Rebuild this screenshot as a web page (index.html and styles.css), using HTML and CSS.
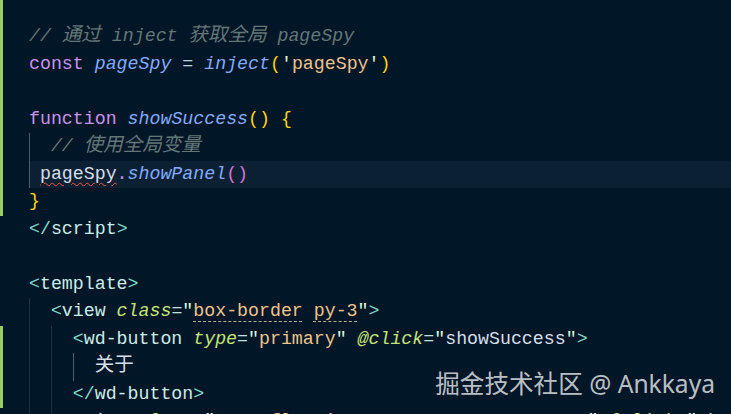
FILE: index.html
```html
<!DOCTYPE html>
<html lang="zh-CN">
<head>
    <meta charset="UTF-8">
    <meta name="viewport" content="width=device-width, initial-scale=1.0">
    <title>pageSpy.vue</title>
    <link rel="stylesheet" href="styles.css">
</head>
<body>
    <div class="editor">
        <div class="row mod pad"><div class="gutter"></div><div class="code"></div></div>
        <div class="row mod"><div class="gutter"></div><div class="code"><span class="cm">// <span class="cjk">通过</span> inject <span class="cjk">获取全局</span> pageSpy</span></div></div>
        <div class="row mod"><div class="gutter"></div><div class="code"><span class="kw">const</span> <span class="fn">pageSpy</span> <span class="op">=</span> <span class="fn">inject</span><span class="b1">(</span><span class="q">'</span><span class="str">pageSpy</span><span class="q">'</span><span class="b1">)</span></div></div>
        <div class="row mod"><div class="gutter"></div><div class="code"></div></div>
        <div class="row mod"><div class="gutter"></div><div class="code"><span class="kw">function</span> <span class="fn">showSuccess</span><span class="b1">()</span> <span class="b1">{</span></div></div>
        <div class="row mod"><div class="gutter"></div><div class="code"><span class="ind on"></span><span class="cm">// <span class="cjk">使用全局变量</span></span></div></div>
        <div class="row mod current"><div class="gutter"></div><div class="code"><span class="ind on one"></span><span class="err">pageSpy</span><span class="pt">.</span><span class="fn">showPanel</span><span class="b2">()</span></div></div>
        <div class="row mod"><div class="gutter"></div><div class="code"><span class="b1">}</span></div></div>
        <div class="row"><div class="gutter"></div><div class="code"><span class="tag">&lt;/</span><span class="tn">script</span><span class="tag">&gt;</span></div></div>
        <div class="row"><div class="gutter"></div><div class="code"></div></div>
        <div class="row"><div class="gutter"></div><div class="code"><span class="tag">&lt;</span><span class="tn">template</span><span class="tag">&gt;</span></div></div>
        <div class="row"><div class="gutter"></div><div class="code"><span class="ind"></span><span class="tag">&lt;</span><span class="tn">view</span> <span class="at">class</span><span class="eq">=</span><span class="q">"</span><span class="str dot">box-border</span><span class="str"> </span><span class="str dot">py-3</span><span class="q">"</span><span class="tag">&gt;</span></div></div>
        <div class="row mod"><div class="gutter"></div><div class="code"><span class="ind"></span><span class="ind"></span><span class="tag">&lt;</span><span class="tn">wd-button</span> <span class="at">type</span><span class="eq">=</span><span class="q">"</span><span class="str">primary</span><span class="q">"</span> <span class="at">@click</span><span class="eq">=</span><span class="q">"</span><span class="txt">showSuccess</span><span class="q">"</span><span class="tag">&gt;</span></div></div>
        <div class="row mod"><div class="gutter"></div><div class="code"><span class="ind"></span><span class="ind"></span><span class="ind on"></span><span class="txt cjk">关于</span></div></div>
        <div class="row mod"><div class="gutter"></div><div class="code"><span class="ind"></span><span class="ind"></span><span class="tag">&lt;/</span><span class="tn">wd-button</span><span class="tag">&gt;</span></div></div>
        <div class="row"><div class="gutter"></div><div class="code"><span class="ind"></span><span class="ind"></span><span class="tag">&lt;</span><span class="tn">view</span> <span class="at">class</span><span class="eq">=</span><span class="q">"</span><span class="str">mt-3 flex items-center text-center</span><span class="q">"</span> <span class="at">@click</span><span class="eq">=</span><span class="q">"</span><span class="txt">showTip</span><span class="q">"</span><span class="tag">&gt;</span></div></div>

        <div class="mark">掘金技术社区 @ Ankkaya</div>
    </div>
</body>
</html>
```

FILE: styles.css
```css
body {
    margin: 0;
    background: #011627;
}

.editor {
    position: relative;
    width: 731px;
    height: 414px;
    overflow: hidden;
    background: #011627;
    font-family: "Liberation Mono", "Noto Sans CJK SC", monospace;
    font-size: 18.25px;
    color: #d6deeb;
}

.row {
    display: flex;
    height: 27.5px;
    line-height: 27.5px;
}

.row.pad {
    height: 23px;
}

.gutter {
    width: 29px;
    flex: none;
    box-sizing: border-box;
}

.mod .gutter {
    border-left: 3px solid #9ccc65;
}

.code {
    flex: 1;
    white-space: pre;
}

.current .code {
    background: #0b2133;
}

/* indent guides */
.ind {
    display: inline-block;
    width: 2ch;
    height: 27.5px;
    vertical-align: top;
    box-shadow: inset 1px 0 #1b3044;
}

.ind.on {
    box-shadow: inset 1px 0 #4a5f74;
}

.ind.one {
    width: 1ch;
}

.cjk {
    font-size: 19.5px;
}

/* tokens */
.cm { color: #637777; font-style: italic; }
.kw { color: #c792ea; }
.fn { color: #82aaff; font-style: italic; }
.op { color: #c5cfe0; }
.pt { color: #c792ea; }
.b1 { color: #ffd700; }
.b2 { color: #da70d6; }
.q { color: #d9f5dd; }
.str { color: #ecc48d; }
.tag { color: #7fdbca; }
.tn { color: #caece6; }
.at { color: #c5e478; font-style: italic; }
.eq { color: #c3e0e0; }
.txt { color: #d6deeb; }

.err {
    text-decoration: underline wavy #ef5350;
    text-decoration-thickness: 1px;
    text-underline-offset: 3px;
}

.dot {
    text-decoration: underline dashed #b9ad96;
    text-decoration-thickness: 1px;
    text-underline-offset: 5px;
}

/* watermark */
.mark {
    position: absolute;
    right: 16px;
    bottom: 18px;
    font-family: "Noto Sans", "Noto Sans CJK SC", sans-serif;
    font-size: 24.6px;
    line-height: 24px;
    color: rgba(255, 255, 255, 0.74);
    white-space: nowrap;
}
```
